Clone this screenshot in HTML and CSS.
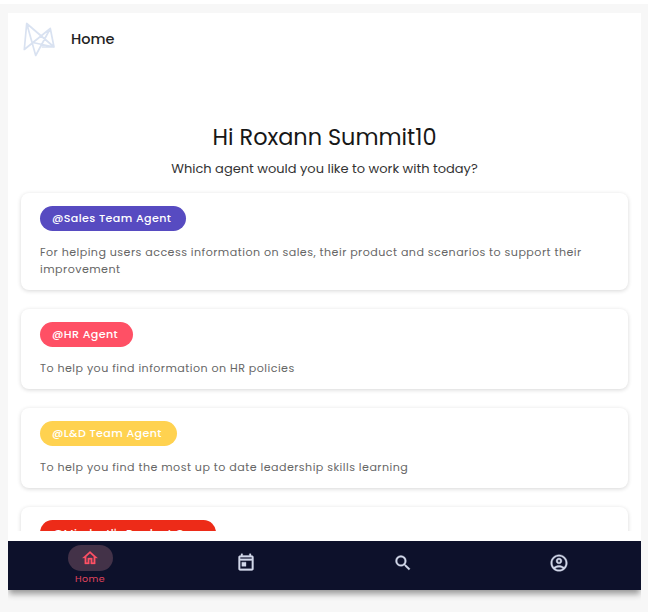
FILE: index.html
```html
<!DOCTYPE html>
<html lang="en">
<head>
<meta charset="utf-8">
<title>Home</title>
<link rel="stylesheet" href="styles.css">
</head>
<body>
<div class="app">
  <header class="topbar">
    <svg class="logo" viewBox="0 0 34 38"><path d="M4.700 3.500 2.300 29.500 28.300 8.500 32 27H20.500M32 27 4.700 3.500 13.700 35.500 28.300 8.500M32 27 10.700 22.500"/></svg>
    <span class="page-title">Home</span>
  </header>
  <main class="content">
    <h1>Hi Roxann Summit10</h1>
    <p class="subtitle">Which agent would you like to work with today?</p>
    <section class="agents">
      <article class="card">
        <span class="pill sales">@Sales Team Agent</span>
        <p>For helping users access information on sales, their product and scenarios to support their<br>improvement</p>
      </article>
      <article class="card">
        <span class="pill hr">@HR Agent</span>
        <p>To help you find information on HR policies</p>
      </article>
      <article class="card">
        <span class="pill learning">@L&amp;D Team Agent</span>
        <p>To help you find the most up to date leadership skills learning</p>
      </article>
      <article class="card">
        <span class="pill product">@Mindsetl's Product Gu...</span>
      </article>
    </section>
  </main>
  <nav class="nav">
    <a class="tab active"><span class="bubble"><svg viewBox="0 0 24 24"><path d="m12 5.690 5 4.500V18h-2v-6H9v6H7v-7.810l5-4.500M12 3 2 12h3v8h6v-6h2v6h6v-8h3z"/></svg></span><span class="label">Home</span></a>
    <a class="tab"><svg viewBox="0 0 24 24"><path d="M19 3h-1V1h-2v2H8V1H6v2H5c-1.110 0-2 .9-2 2v14c0 1.100.89 2 2 2h14c1.100 0 2-.9 2-2V5c0-1.100-.9-2-2-2m0 16H5V9h14zm0-12H5V5h14zM7 11h5v5H7z"/></svg></a>
    <a class="tab"><svg viewBox="0 0 24 24"><path d="M15.500 14h-.79l-.28-.27A6.470 6.470 0 0 0 16 9.500 6.500 6.500 0 1 0 9.500 16c1.610 0 3.090-.59 4.230-1.570l.27.28v.79l5 4.990L20.490 19zm-6 0C7.010 14 5 11.990 5 9.500S7.010 5 9.500 5 14 7.010 14 9.500 11.990 14 9.500 14"/></svg></a>
    <a class="tab"><svg viewBox="0 0 24 24"><path d="M12 2C6.480 2 2 6.480 2 12s4.480 10 10 10 10-4.480 10-10S17.520 2 12 2M7.350 18.500C8.660 17.560 10.260 17 12 17s3.340.56 4.650 1.500C15.340 19.440 13.740 20 12 20s-3.340-.56-4.650-1.500m10.790-1.380C16.450 15.800 14.320 15 12 15s-4.450.8-6.140 2.120C4.700 15.730 4 13.950 4 12c0-4.420 3.580-8 8-8s8 3.580 8 8c0 1.950-.7 3.730-1.860 5.120M12 6c-1.930 0-3.500 1.570-3.500 3.500S10.070 13 12 13s3.500-1.570 3.500-3.500S13.930 6 12 6m0 5c-.83 0-1.500-.67-1.500-1.500S11.170 8 12 8s1.500.67 1.500 1.500S12.830 11 12 11"/></svg></a>
  </nav>
</div>
</body>
</html>
```
FILE: styles.css
```css
* { box-sizing: border-box; }
body {
  margin: 0;
  height: 612px;
  padding: 9px 7px 0 8px;
  border-top: 4px solid #fff;
  background: #f7f7f7;
  font-family: Poppins, Inter, "Liberation Sans", sans-serif;
  overflow: hidden;
}
h1, p { margin: 0; }
.app {
  height: 577px;
  display: flex;
  flex-direction: column;
  background: #fff;
  box-shadow: 0 5px 6px -1px #999;
  clip-path: inset(0 0 -20px 0);
}
.topbar {
  height: 50px;
  display: flex;
  align-items: center;
  gap: 15px;
  padding: 2px 0 0 14px;
}
.logo { width: 34px; height: 38px; fill: none; stroke: #d9e2f1; stroke-width: 1.7; stroke-linejoin: round; stroke-linecap: round; }
.page-title { font-size: 14.500px; font-weight: 500; color: #222; }
.content { height: 468px; overflow: hidden; padding: 56px 13px 0; }
h1 { height: 36px; line-height: 37px; text-align: center; font-size: 22.400px; font-weight: 400; color: #171717; }
.subtitle { height: 38px; padding-top: 4px; line-height: 20px; text-align: center; font-size: 13px; color: #333; }
.agents { display: flex; flex-direction: column; gap: 19px; }
.card {
  flex: none;
  min-height: 80px;
  padding: 13px 19px 12px;
  border-radius: 8px;
  background: #fff;
  box-shadow: 0 1px 4px rgba(0, 0, 0, .16);
}
.card p { margin-top: 13px; line-height: 17px; font-size: 11.100px; letter-spacing: .46px; color: #666; white-space: nowrap; }
.pill {
  display: block;
  width: max-content;
  height: 25px;
  padding: 0 15px 0 12px;
  border-radius: 13px;
  line-height: 24px;
  font-size: 11.100px;
  font-weight: 500;
  letter-spacing: .39px;
  color: #fff;
}
.sales { background: #574bc1; }
.hr { background: #ff5065; }
.learning { background: #ffd250; }
.product { background: #ed2b18; line-height: 26px; }
.nav { height: 49px; margin-top: auto; display: grid; grid-template-columns: repeat(4, 1fr); padding: 0 4px; background: #0d112b; }
.tab { display: flex; flex-direction: column; align-items: center; padding-top: 12px; }
.tab svg { width: 20px; height: 20px; fill: #d2d8ea; stroke: #d2d8ea; stroke-width: .4; }
.tab.active { padding-top: 4px; }
.tab .bubble { width: 45px; height: 26px; border-radius: 13px; display: flex; align-items: center; justify-content: center; background: #433248; }
.tab .bubble svg { width: 18px; height: 18px; fill: #ff5065; stroke: #ff5065; }
.label { line-height: 16px; font-size: 9.500px; letter-spacing: .45px; color: #e0455e; }
```
